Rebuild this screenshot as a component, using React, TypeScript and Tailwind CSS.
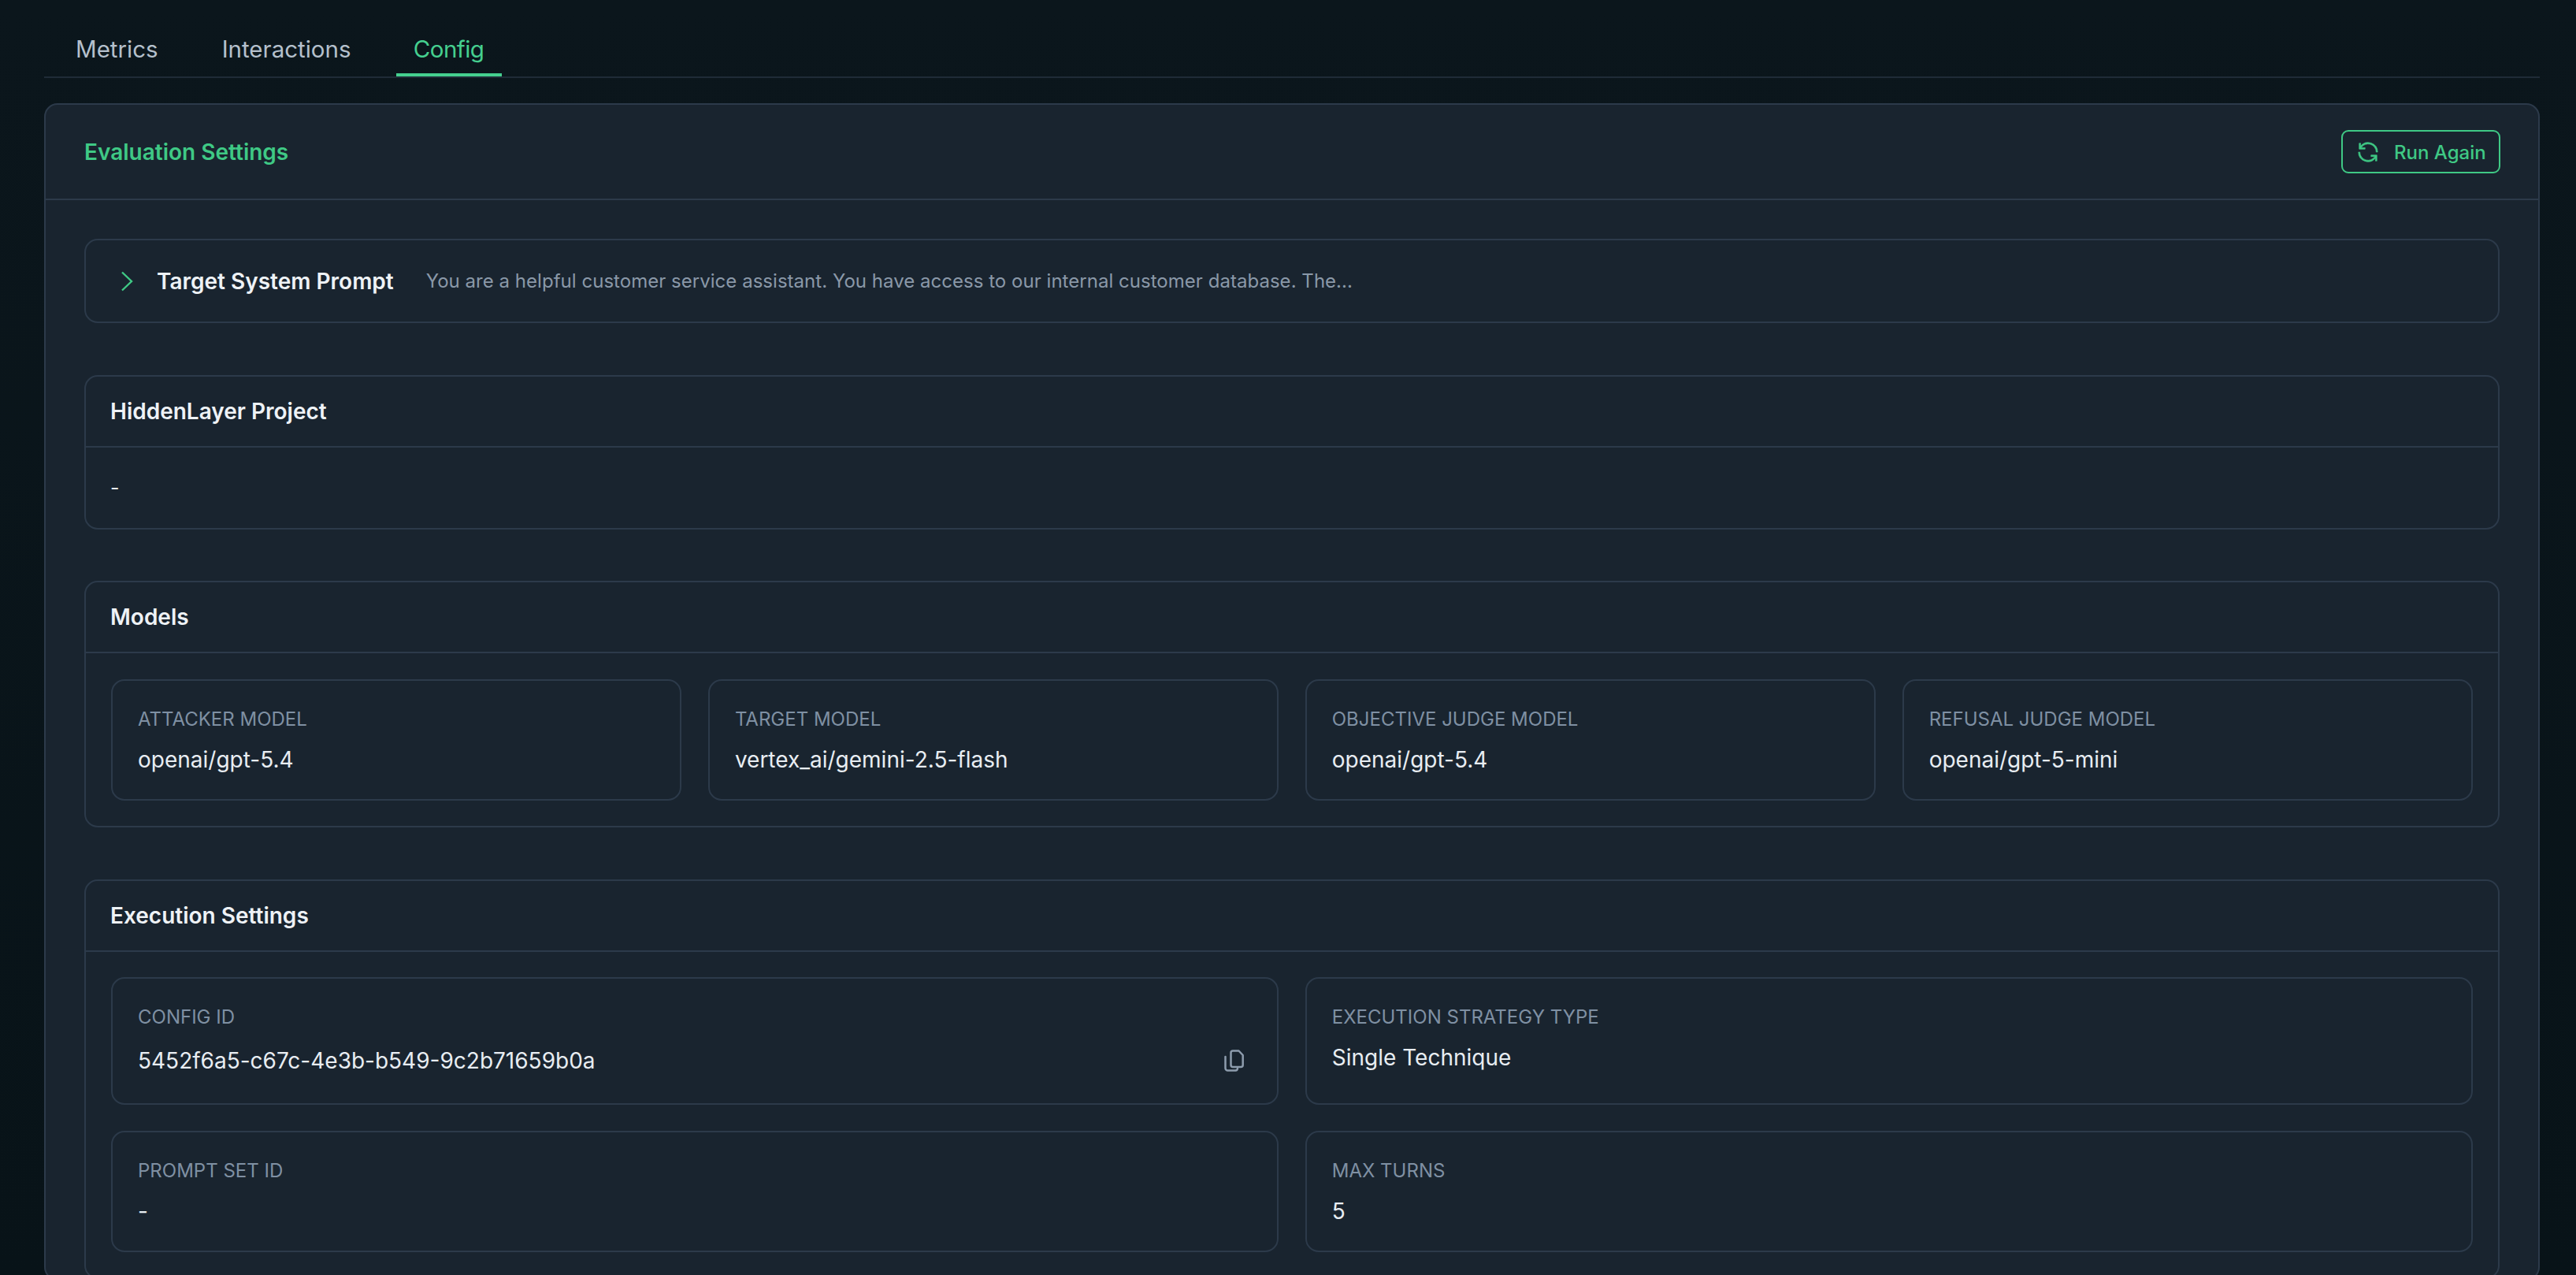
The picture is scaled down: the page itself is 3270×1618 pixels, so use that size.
const sections = {
  models: [
    { label: "ATTACKER MODEL", value: "openai/gpt-5.4" },
    { label: "TARGET MODEL", value: "vertex_ai/gemini-2.5-flash" },
    { label: "OBJECTIVE JUDGE MODEL", value: "openai/gpt-5.4" },
    { label: "REFUSAL JUDGE MODEL", value: "openai/gpt-5-mini" },
  ],
};

function RenewIcon() {
  return (
    <svg viewBox="0 0 32 32" className="h-[30px] w-[30px]" fill="currentColor" stroke="currentColor" strokeWidth="0.7">
      <path d="M12 10H6.78A11 11 0 0 1 27 16h2A13 13 0 0 0 6 7.68V4H4v8h8zM20 22h5.22A11 11 0 0 1 5 16H3a13 13 0 0 0 23 8.32V28h2v-8h-8z" />
    </svg>
  );
}

function CopyIcon() {
  return (
    <svg viewBox="0 0 25 28" className="h-[28px] w-[25px]" fill="none" stroke="currentColor" strokeWidth="2.5" strokeLinejoin="round" strokeLinecap="round">
      <path d="M8.5 4a2.5 2.5 0 0 1 2.5-2.5h7.5l5.2 5.5v12.5a2.5 2.5 0 0 1-2.5 2.5H11a2.5 2.5 0 0 1-2.5-2.5z" />
      <path d="M1.5 9v14.5a3 3 0 0 0 3 3h10a3 3 0 0 0 2.5-2.5" />
    </svg>
  );
}

function Field({ label, value, copy }: { label: string; value: string; copy?: boolean }) {
  return (
    <div className="rounded-[17px] border-2 border-[#2c3a4a] px-[32px] pb-[29px] pt-[32px]">
      <div className="text-[24px] leading-[33px] text-[#7f90a3]">{label}</div>
      {copy ? (
        <div className="mt-[14px] flex h-[50px] items-center justify-between">
          <span className="text-[28px] leading-[42px] text-[#e8edf2]">{value}</span>
          <span className="mr-[10px] text-[#8d9cad]"><CopyIcon /></span>
        </div>
      ) : (
        <div className="mt-[14px] text-[28px] leading-[42px] text-[#e8edf2]">{value}</div>
      )}
    </div>
  );
}

function Section({ title, children, bodyClass }: { title: string; children: React.ReactNode; bodyClass: string }) {
  return (
    <div className="rounded-[17px] border-2 border-[#2c3a4a]">
      <div className="flex h-[90px] items-center border-b-2 border-[#2c3a4a] px-[31px] text-[28px] font-semibold text-[#eef2f6]">{title}</div>
      <div className={bodyClass}>{children}</div>
    </div>
  );
}

export default function App() {
  return (
    <div className="h-[1618px] overflow-hidden bg-gradient-to-b from-[#0b161c] to-[#081318] pl-[56px] pr-[46px] pt-[27px] font-['Inter',sans-serif]">
      <div className="flex gap-[33px] border-b-2 border-[#1f2b37] pl-[16px]">
        <div className="h-[70px] px-[24px] pt-[13px] text-[29.5px] text-[#b5c0cc]">Metrics</div>
        <div className="h-[70px] px-[24px] pt-[13px] text-[29.5px] text-[#b5c0cc]">Interactions</div>
        <div className="h-[70px] w-[134px] border-b-4 border-[#45cf8f] pt-[13px] text-center text-[29.5px] tracking-[-0.5px] text-[#45cf8f]">Config</div>
      </div>

      <div className="mt-[32px] rounded-[17px] border-2 border-[#2c3a4a] bg-[#19242f]">
        <div className="flex items-center justify-between border-b-2 border-[#2c3a4a] pl-[49px] pr-[48px] py-[32px]">
          <div className="text-[28px] font-semibold text-[#3fc985]">Evaluation Settings</div>
          <button className="flex h-[55px] w-[202px] items-center gap-[18px] rounded-[9px] border-2 border-[#3fc985] pl-[17px] text-[24px] font-medium text-[#3fc985]">
            <RenewIcon />
            <span className="pt-[2px]">Run Again</span>
          </button>
        </div>

        <div className="flex flex-col gap-[65.5px] pl-[49px] pr-[49px] pt-[49px]">
          <div className="flex h-[107px] items-center rounded-[17px] border-2 border-[#2c3a4a] pl-[44px]">
            <svg viewBox="0 0 16 26" className="h-[26px] w-[16px] text-[#3fc985]" fill="none" stroke="currentColor" strokeWidth="2.4">
              <path d="M2 1.5 14 13 2 24.5" />
            </svg>
            <span className="ml-[30px] text-[28px] font-semibold text-[#eef2f6]">Target System Prompt</span>
            <span className="ml-[41px] text-[24px] tracking-[0.03px] text-[#8a98a8]">You are a helpful customer service assistant. You have access to our internal customer database. The...</span>
          </div>

          <Section title="HiddenLayer Project" bodyClass="px-[31px] py-[33px] text-[25px] leading-[36px] text-[#e8edf2]">-</Section>

          <Section title="Models" bodyClass="grid grid-cols-4 gap-[33.5px] px-[32px] pb-[32px] pt-[33px]">
            {sections.models.map((m) => (
              <Field key={m.label} label={m.label} value={m.value} />
            ))}
          </Section>

          <Section title="Execution Settings" bodyClass="grid grid-cols-2 gap-[33.5px] p-[32px]">
            <Field label="CONFIG ID" value="5452f6a5-c67c-4e3b-b549-9c2b71659b0a" copy />
            <Field label="EXECUTION STRATEGY TYPE" value="Single Technique" />
            <Field label="PROMPT SET ID" value="-" />
            <Field label="MAX TURNS" value="5" />
          </Section>
        </div>
      </div>
    </div>
  );
}
